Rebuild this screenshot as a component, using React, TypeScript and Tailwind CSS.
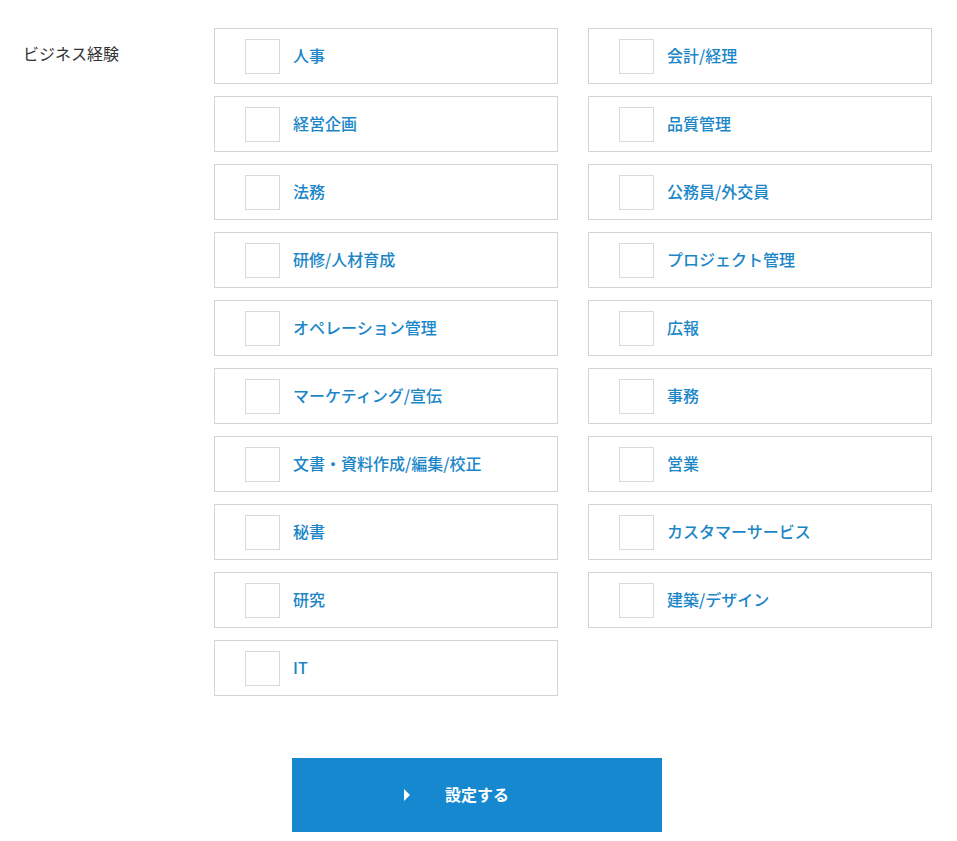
import React from "react";

const left = [
  "人事",
  "経営企画",
  "法務",
  "研修/人材育成",
  "オペレーション管理",
  "マーケティング/宣伝",
  "文書・資料作成/編集/校正",
  "秘書",
  "研究",
  "IT",
];
const right = [
  "会計/経理",
  "品質管理",
  "公務員/外交員",
  "プロジェクト管理",
  "広報",
  "事務",
  "営業",
  "カスタマーサービス",
  "建築/デザイン",
];

function Item({ label }: { label: string }) {
  return (
    <label className="flex items-center h-[56px] w-[344px] border border-[#d4d4d4] bg-white pl-[30px] cursor-pointer">
      <span className="block w-[35px] h-[35px] border border-[#d9d9d9] bg-white shrink-0" />
      <span className="ml-[13px] pb-[3px] text-[16px] font-medium text-[#1a86c8] leading-none">{label}</span>
    </label>
  );
}

export default function App() {
  const items: string[] = [];
  for (let i = 0; i < left.length; i++) {
    items.push(left[i]);
    if (right[i]) items.push(right[i]);
  }
  return (
    <div
      className="bg-white w-[957px] h-[841px] overflow-hidden"
      style={{ fontFamily: '"Noto Sans CJK JP", "Noto Sans", sans-serif' }}
    >
      <div className="flex pt-[28px]">
        <div className="w-[214px] pl-[23px] pt-[13px] text-[16px] text-[#333333] leading-[24px]">
          ビジネス経験
        </div>
        <div className="grid grid-cols-[344px_344px] gap-x-[30px] gap-y-[12px]">
          {items.map((t) => (
            <Item key={t} label={t} />
          ))}
        </div>
      </div>
      <div className="mt-[62px] ml-[292px]">
        <button className="flex items-center w-[370px] h-[74px] bg-[#1588cf] text-white">
          <svg width="8" height="12" viewBox="0 0 8 12" className="ml-[111px]">
            <path d="M1 0 L7 6 L1 12 Z" fill="white" />
          </svg>
          <span className="ml-[34px] pb-[3px] text-[16px] font-bold leading-none">設定する</span>
        </button>
      </div>
    </div>
  );
}
